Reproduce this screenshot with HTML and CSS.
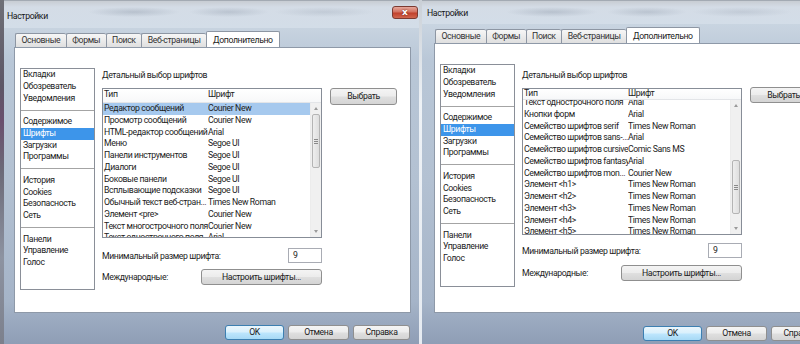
FILE: index.html
```html
<!DOCTYPE html>
<html lang="ru">
<head>
<meta charset="utf-8">
<title>Настройки</title>
<link rel="stylesheet" href="styles.css">
</head>
<body>
<div class="screen">
  <div class="desk-left"></div>

  <section class="win win-a">
    <header class="titlebar"><span class="title">Настройки</span><span class="close">x</span></header>
    <nav class="tabs">
      <span class="tab">Основные</span><span class="tab">Формы</span><span class="tab">Поиск</span><span class="tab">Веб-страницы</span><span class="tab tab-on">Дополнительно</span>
    </nav>
    <div class="panel">
      <ul class="side">
        <li>Вкладки</li><li>Обозреватель</li><li>Уведомления</li>
        <li class="sep"></li>
        <li>Содержимое</li><li class="on">Шрифты</li><li>Загрузки</li><li>Программы</li>
        <li class="sep"></li>
        <li>История</li><li>Cookies</li><li>Безопасность</li><li>Сеть</li>
        <li class="sep"></li>
        <li>Панели</li><li>Управление</li><li>Голос</li>
      </ul>
      <div class="main">
        <div class="heading">Детальный выбор шрифтов</div>
        <div class="fontarea">
          <div class="table">
            <div class="thead"><span class="c1">Тип</span><span class="c2">Шрифт</span></div>
            <div class="tbody">
              <div class="rows">
                <div class="tr sel"><span class="c1">Редактор сообщений</span><span class="c2">Courier New</span></div>
                <div class="tr"><span class="c1">Просмотр сообщений</span><span class="c2">Courier New</span></div>
                <div class="tr"><span class="c1">HTML-редактор сообщений</span><span class="c2">Arial</span></div>
                <div class="tr"><span class="c1">Меню</span><span class="c2">Segoe UI</span></div>
                <div class="tr"><span class="c1">Панели инструментов</span><span class="c2">Segoe UI</span></div>
                <div class="tr"><span class="c1">Диалоги</span><span class="c2">Segoe UI</span></div>
                <div class="tr"><span class="c1">Боковые панели</span><span class="c2">Segoe UI</span></div>
                <div class="tr"><span class="c1">Всплывающие подсказки</span><span class="c2">Segoe UI</span></div>
                <div class="tr"><span class="c1">Обычный текст веб-стран...</span><span class="c2">Times New Roman</span></div>
                <div class="tr"><span class="c1">Элемент &lt;pre&gt;</span><span class="c2">Courier New</span></div>
                <div class="tr"><span class="c1">Текст многострочного поля</span><span class="c2">Courier New</span></div>
                <div class="tr"><span class="c1">Текст однострочного поля</span><span class="c2">Arial</span></div>
              </div>
              <div class="sbar">
                <span class="sb-btn"><i class="arr up"></i></span>
                <span class="sb-track"><span class="sb-thumb" style="margin-top:0px"><i class="grip"></i></span></span>
                <span class="sb-btn"><i class="arr down"></i></span>
              </div>
            </div>
          </div>
          <span class="btn pick">Выбрать</span>
        </div>
        <div class="opt opt-min"><span>Минимальный размер шрифта:</span><span class="field">9</span></div>
        <div class="opt opt-intl"><span>Международные:</span><span class="btn setup">Настроить шрифты...</span></div>
      </div>
    </div>
    <footer class="actions">
      <span class="btn act ok">OK</span><span class="btn act cancel">Отмена</span><span class="btn act help">Справка</span>
    </footer>
  </section>

  <div class="desk-gap"></div>

  <section class="win win-b">
    <header class="titlebar"><span class="title">Настройки</span><span class="close">x</span></header>
    <nav class="tabs">
      <span class="tab">Основные</span><span class="tab">Формы</span><span class="tab">Поиск</span><span class="tab">Веб-страницы</span><span class="tab tab-on">Дополнительно</span>
    </nav>
    <div class="panel">
      <ul class="side">
        <li>Вкладки</li><li>Обозреватель</li><li>Уведомления</li>
        <li class="sep"></li>
        <li>Содержимое</li><li class="on">Шрифты</li><li>Загрузки</li><li>Программы</li>
        <li class="sep"></li>
        <li>История</li><li>Cookies</li><li>Безопасность</li><li>Сеть</li>
        <li class="sep"></li>
        <li>Панели</li><li>Управление</li><li>Голос</li>
      </ul>
      <div class="main">
        <div class="heading">Детальный выбор шрифтов</div>
        <div class="fontarea">
          <div class="table">
            <div class="thead"><span class="c1">Тип</span><span class="c2">Шрифт</span></div>
            <div class="tbody">
              <div class="rows rows-scrolled">
                <div class="tr"><span class="c1">Текст однострочного поля</span><span class="c2">Arial</span></div>
                <div class="tr"><span class="c1">Кнопки форм</span><span class="c2">Arial</span></div>
                <div class="tr"><span class="c1">Семейство шрифтов serif</span><span class="c2">Times New Roman</span></div>
                <div class="tr"><span class="c1">Семейство шрифтов sans-...</span><span class="c2">Arial</span></div>
                <div class="tr"><span class="c1">Семейство шрифтов cursive</span><span class="c2">Comic Sans MS</span></div>
                <div class="tr"><span class="c1">Семейство шрифтов fantasy</span><span class="c2">Arial</span></div>
                <div class="tr"><span class="c1">Семейство шрифтов mon...</span><span class="c2">Courier New</span></div>
                <div class="tr"><span class="c1">Элемент &lt;h1&gt;</span><span class="c2">Times New Roman</span></div>
                <div class="tr"><span class="c1">Элемент &lt;h2&gt;</span><span class="c2">Times New Roman</span></div>
                <div class="tr"><span class="c1">Элемент &lt;h3&gt;</span><span class="c2">Times New Roman</span></div>
                <div class="tr"><span class="c1">Элемент &lt;h4&gt;</span><span class="c2">Times New Roman</span></div>
                <div class="tr"><span class="c1">Элемент &lt;h5&gt;</span><span class="c2">Times New Roman</span></div>
              </div>
              <div class="sbar">
                <span class="sb-btn"><i class="arr up"></i></span>
                <span class="sb-track"><span class="sb-thumb" style="margin-top:49px"><i class="grip"></i></span></span>
                <span class="sb-btn"><i class="arr down"></i></span>
              </div>
            </div>
          </div>
          <span class="btn pick">Выбрать</span>
        </div>
        <div class="opt opt-min"><span>Минимальный размер шрифта:</span><span class="field">9</span></div>
        <div class="opt opt-intl"><span>Международные:</span><span class="btn setup">Настроить шрифты...</span></div>
      </div>
    </div>
    <footer class="actions">
      <span class="btn act ok">OK</span><span class="btn act cancel">Отмена</span><span class="btn act help">Справка</span>
    </footer>
  </section>
</div>
</body>
</html>
```

FILE: styles.css
```css
html, body {
  margin: 0;
  padding: 0;
}

body {
  width: 800px;
  height: 344px;
  overflow: hidden;
  background: #7b7f8c;
  font-family: Roboto, "Noto Sans", "DejaVu Sans", sans-serif;
  font-size: 8.7px;
  letter-spacing: -0.38px;
  color: #1c1c1c;
}

.screen {
  display: flex;
  height: 344px;
}

.desk-left {
  flex: none;
  width: 4px;
  background: linear-gradient(180deg, #6f7077 0, #5d5666 25%, #6a4f6e 35%, #6c6a78 50%, #8d93a1 75%, #7c808c 100%);
}

.desk-gap {
  flex: none;
  width: 3px;
  background: linear-gradient(180deg, #c9cfd6 0, #eef2f6 30%, #e6ebf1 100%);
}

/* ---------- window ---------- */
.win {
  flex: none;
  width: 415px;
  height: 344px;
  box-sizing: border-box;
  display: flex;
  flex-direction: column;
  padding: 0 8px 0 10px;
  border-top: 1px solid #a3aab3;
  background: linear-gradient(180deg, #d2dce7 0, #c6d2df 30px, #b9c7d7 60px, #b3c1d2 180px, #a5b4c8 300px, #8e9db5 344px);
}

.win-b {
  padding-left: 12px;
}

.titlebar {
  flex: none;
  height: 27px;
  display: flex;
  align-items: flex-start;
  margin: 0 -8px 0 -10px;
  padding: 0 1px 0 3px;
  background:
    radial-gradient(ellipse 46px 5px at 130px 11px, rgba(110, 122, 140, 0.28), rgba(110, 122, 140, 0) 100%),
    radial-gradient(ellipse 40px 5px at 225px 11px, rgba(110, 122, 140, 0.25), rgba(110, 122, 140, 0) 100%),
    radial-gradient(ellipse 50px 5px at 320px 11px, rgba(110, 122, 140, 0.18), rgba(110, 122, 140, 0) 100%),
    linear-gradient(180deg, #c8cdd3 0, #d4dce6 6px, #d3dde8 100%);
}

.win-b .titlebar {
  height: 23px;
  margin-left: -12px;
  padding-left: 5px;
}

.title {
  line-height: 12px;
  padding-top: 9px;
  color: #151515;
}

.win-b .title {
  padding-top: 6px;
}

.close {
  margin-left: auto;
  margin-top: 5px;
  width: 26px;
  height: 13px;
  box-sizing: border-box;
  border: 1px solid #7b3a31;
  border-radius: 3px;
  background: linear-gradient(180deg, #e6a89c 0, #d2705f 45%, #c1412c 55%, #d0664e 100%);
  color: #fff;
  font-family: "DejaVu Sans", sans-serif;
  font-weight: bold;
  font-size: 9px;
  letter-spacing: 0;
  line-height: 10px;
  text-align: center;
  text-shadow: 0 0 2px #5a1a10;
}

/* ---------- tabs ---------- */
.tabs {
  flex: none;
  height: 19px;
  display: flex;
  align-items: flex-end;
  padding-left: 1px;
}

.tab {
  height: 14px;
  box-sizing: border-box;
  padding: 0 5.5px;
  line-height: 13px;
  border: 1px solid #8d96a3;
  border-bottom: 0;
  border-right: 0;
  border-radius: 2px 2px 0 0;
  background: linear-gradient(180deg, #f6f6f6 0, #ebebeb 50%, #dfdfdf 100%);
  color: #333;
  white-space: nowrap;
}

.tab-on {
  height: 17px;
  line-height: 16px;
  padding: 0 6px;
  background: #fff;
  color: #1c1c1c;
  border-right: 1px solid #8d96a3;
  margin-bottom: -1px;
}

/* ---------- panel ---------- */
.panel {
  flex: none;
  height: 266px;
  box-sizing: border-box;
  background: #fff;
  border: 1px solid #8e99a8;
  display: flex;
  align-items: flex-start;
  gap: 7px;
  padding: 20px 0 0 5px;
}

.win-b .panel {
  height: 270px;
}

.side {
  flex: none;
  list-style: none;
  margin: 0;
  padding: 0;
  width: 75px;
  height: 222px;
  box-sizing: border-box;
  border: 1px solid #8a8f98;
}

.win-b .side {
  height: 223px;
}

.side li {
  height: 11.75px;
  line-height: 11.75px;
  padding-left: 2px;
  white-space: nowrap;
}

.side li.on {
  background: #3d95ea;
  color: #fff;
}

.side li.sep {
  background: linear-gradient(#a4a4a4, #a4a4a4) center / 100% 1px no-repeat;
}

.main {
  flex: none;
  width: 295px;
  margin-top: 1px;
}

.win-b .main {
  margin-top: 5px;
}

.heading {
  line-height: 12px;
  margin-bottom: 7px;
}

.fontarea {
  display: flex;
  align-items: flex-start;
  gap: 8px;
}

/* ---------- list view ---------- */
.table {
  flex: none;
  width: 220px;
  height: 150px;
  box-sizing: border-box;
  border: 1px solid #878d97;
  display: flex;
  flex-direction: column;
}

.win-b .table {
  height: 147px;
}

.thead {
  flex: none;
  height: 13px;
  display: flex;
  line-height: 11px;
  background: linear-gradient(180deg, #ffffff 0, #f7f8f9 100%);
  border-bottom: 1px solid #e3e5e8;
}

.win-b .thead {
  height: 10px;
  line-height: 8px;
}

.c1 {
  flex: none;
  width: 105px;
  padding-left: 1px;
  box-sizing: border-box;
  white-space: nowrap;
  overflow: hidden;
}

.c2 {
  flex: 1;
  white-space: nowrap;
  overflow: hidden;
}

.tbody {
  flex: 1;
  display: flex;
  overflow: hidden;
}

.rows {
  flex: 1;
  overflow: hidden;
}

.rows-scrolled .tr:first-child {
  margin-top: -3px;
}

.tr {
  display: flex;
  height: 11.75px;
  line-height: 11.75px;
}

.tr.sel {
  background: #a6c9ee;
}

.sbar {
  flex: none;
  width: 10px;
  display: flex;
  flex-direction: column;
  background: #f0f0f0;
  border-left: 1px solid #ececec;
}

.sb-btn {
  flex: none;
  height: 11px;
  display: flex;
  align-items: center;
  justify-content: center;
}

.arr {
  width: 0;
  height: 0;
  border-left: 2.5px solid transparent;
  border-right: 2.5px solid transparent;
}

.arr.up {
  border-bottom: 3px solid #9a9a9a;
}

.arr.down {
  border-top: 3px solid #9a9a9a;
}

.sb-track {
  flex: 1;
  display: flex;
  flex-direction: column;
  padding: 0 1px;
}

.sb-thumb {
  flex: none;
  height: 54px;
  box-sizing: border-box;
  border: 1px solid #b4b4b4;
  border-radius: 2px;
  background: linear-gradient(90deg, #eeeeee 0, #dedede 100%);
  display: flex;
  align-items: center;
  justify-content: center;
}

.grip {
  width: 4px;
  height: 5px;
  background: repeating-linear-gradient(180deg, #8a8a8a 0, #8a8a8a 1px, transparent 1px, transparent 2px);
}

/* ---------- buttons & fields ---------- */
.btn {
  display: inline-block;
  box-sizing: border-box;
  border: 1px solid #8f8f8f;
  border-radius: 3px;
  background: linear-gradient(180deg, #f4f4f4 0, #ececec 48%, #dfdfdf 52%, #d4d4d4 100%);
  text-align: center;
  color: #1c1c1c;
  white-space: nowrap;
}

.pick {
  flex: none;
  width: 67px;
  height: 17px;
  line-height: 15px;
}

.win-b .pick {
  height: 16px;
  margin-top: -1px;
  line-height: 14px;
}

.opt {
  display: flex;
  align-items: center;
  justify-content: space-between;
  width: 220px;
}

.opt-min {
  margin-top: 10px;
}

.win-b .opt-min {
  margin-top: 8px;
}

.opt-intl {
  margin-top: 6px;
}

.win-b .opt-intl {
  margin-top: 7px;
}

.field {
  width: 34px;
  height: 15px;
  box-sizing: border-box;
  border: 1px solid #a9acb4;
  background: #fff;
  padding-left: 4px;
  line-height: 13px;
}

.setup {
  width: 121px;
  height: 16px;
  line-height: 14px;
}

.actions {
  flex: none;
  display: flex;
  justify-content: flex-end;
  gap: 4px;
  padding: 12px 1px 0 0;
}

.win-b .actions {
  padding-top: 13px;
}

.act {
  height: 15px;
  line-height: 13px;
}

.ok {
  width: 59px;
  border-color: #3c7fb1;
  background: linear-gradient(180deg, #eaf6fd 0, #d9f0fc 48%, #bee6fd 52%, #a7d9f5 100%);
}

.cancel {
  width: 61px;
}

.help {
  width: 57px;
}
```
